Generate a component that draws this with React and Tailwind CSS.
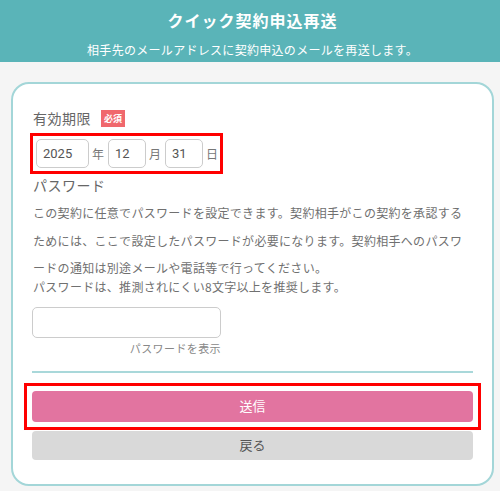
export default function App() {
  const font = { fontFamily: '"Noto Sans CJK JP", "Noto Sans", sans-serif' }
  const num = { fontFamily: 'Roboto, sans-serif' }
  return (
    <div className="w-[500px] h-[491px] bg-[#f5f5f5] overflow-hidden" style={font}>
      <header className="h-[62px] bg-[#5ab4b8] text-white flex flex-col items-center pl-[5px]">
        <h1 className="mt-[9px] text-[16px] leading-[22px] font-bold tracking-[1px]">クイック契約申込再送</h1>
        <p className="mt-[11px] text-[12px] leading-[16px] tracking-[0.3px]">相手先のメールアドレスに契約申込のメールを再送します。</p>
      </header>

      <div className="ml-[11px] mr-[6px] mt-[20px] h-[404px] bg-white border-2 border-[#a3d6d8] rounded-[18px] pl-[19px] pr-[19px] pt-[23px]">
        <div className="flex items-center gap-[10px] h-[22px] ml-[1px]">
          <span className="text-[14px] text-[#666] tracking-[0.5px]">有効期限</span>
          <span className="bg-[#f0686d] text-white text-[9px] leading-[17px] px-[3px] font-bold">必須</span>
        </div>

        <div className="mt-[4px] w-[193px] h-[41px] border-[3px] border-[#ff0000] flex items-center pl-[3px] -ml-[2px] gap-[3px]">
          <div className="w-[53px] h-[29px] border border-[#ccc] rounded-[5px] flex items-center pl-[6px] text-[13px] text-[#555]" style={num}>2025</div>
          <span className="text-[12px] text-[#777] mr-[1px]">年</span>
          <div className="w-[38px] h-[29px] border border-[#ccc] rounded-[5px] flex items-center pl-[6px] text-[13px] text-[#555]" style={num}>12</div>
          <span className="text-[12px] text-[#777] mr-[1px]">月</span>
          <div className="w-[38px] h-[29px] border border-[#ccc] rounded-[5px] flex items-center pl-[6px] text-[13px] text-[#555]" style={num}>31</div>
          <span className="text-[12px] text-[#777]">日</span>
        </div>

        <div className="mt-[1px] text-[14px] leading-[20px] text-[#666] tracking-[0.5px] ml-[1px]">パスワード</div>
        <p className="mt-[4px] text-[12px] leading-[27.5px] text-[#707070] tracking-[0.3px] ml-[1px]">
          この契約に任意でパスワードを設定できます。契約相手がこの契約を承認するためには、ここで設定したパスワードが必要になります。契約相手へのパスワードの通知は別途メールや電話等で行ってください。
        </p>
        <p className="-mt-[2px] text-[12px] leading-[14px] text-[#707070] tracking-[0.3px] ml-[1px]">パスワードは、推測されにくい8文字以上を推奨します。</p>

        <div className="mt-[13px] w-[189px] h-[31px] border border-[#ccc] rounded-[5px]"></div>
        <div className="w-[189px] text-right text-[11px] leading-[14px] mt-[3px] text-[#888] tracking-[0.4px]">パスワードを表示</div>

        <div className="mt-[16px] h-[2px] bg-[#a9d8da]"></div>

        <div className="mt-[10px] -mx-[8px] border-[3px] border-[#ff0000] p-[5px]">
          <button className="w-full h-[31px] rounded-[4px] bg-[#e274a0] text-white text-[13px]">送信</button>
        </div>
        <button className="w-full h-[29px] rounded-[4px] bg-[#d9d9d9] text-[#555] text-[13px] mt-[1px]">戻る</button>
      </div>
    </div>
  )
}
